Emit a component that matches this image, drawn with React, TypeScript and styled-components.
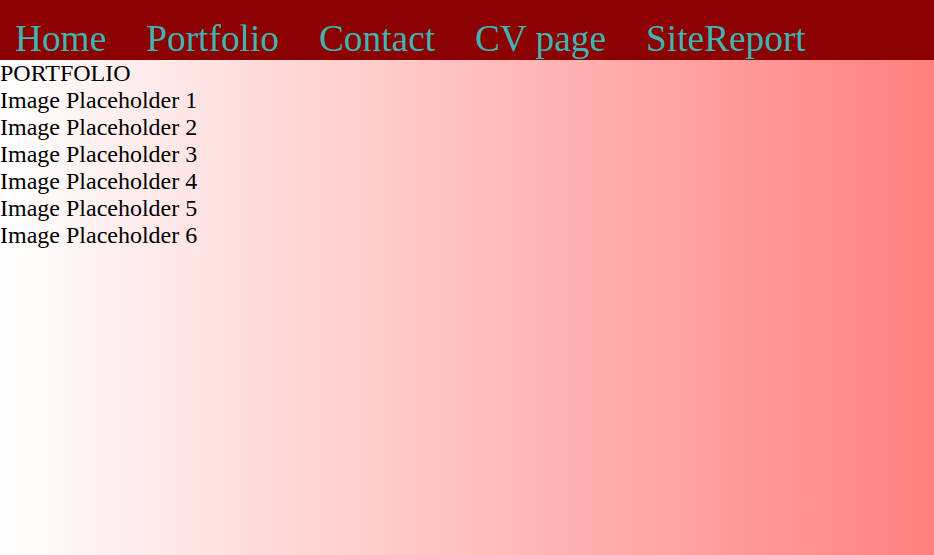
import React from "react";
import styled, { createGlobalStyle } from "styled-components";

const GlobalStyle = createGlobalStyle`
  html, body {
    margin: 0;
    padding: 0;
  }
  body {
    font-family: "Liberation Serif", "Times New Roman", serif;
  }
`;

const Page = styled.div`
  min-height: 100vh;
  background: linear-gradient(to right, #ffffff, #ff8080);
  color: #000;
`;

const NavBar = styled.nav`
  height: 60px;
  box-sizing: border-box;
  background: #8b0000;
  display: flex;
  align-items: flex-start;
  gap: 40px;
  padding: 17px 0 0 15px;
`;

const NavLink = styled.a`
  font-family: "Liberation Serif", "Times New Roman", serif;
  font-size: 28pt;
  line-height: normal;
  color: #40b4b0;
  text-decoration: none;
  white-space: nowrap;
`;

const Content = styled.main`
  display: flex;
  flex-direction: column;
  font-family: "Liberation Serif", "Times New Roman", serif;
  font-size: 18pt;
  line-height: normal;
`;

const Line = styled.div``;

const links = ["Home", "Portfolio", "Contact", "CV page", "SiteReport"];

export default function App() {
  return (
    <Page>
      <GlobalStyle />
      <NavBar>
        {links.map((l) => (
          <NavLink key={l} href="#">
            {l}
          </NavLink>
        ))}
      </NavBar>
      <Content>
        <Line>PORTFOLIO</Line>
        {[1, 2, 3, 4, 5, 6].map((n) => (
          <Line key={n}>Image Placeholder {n}</Line>
        ))}
      </Content>
    </Page>
  );
}
